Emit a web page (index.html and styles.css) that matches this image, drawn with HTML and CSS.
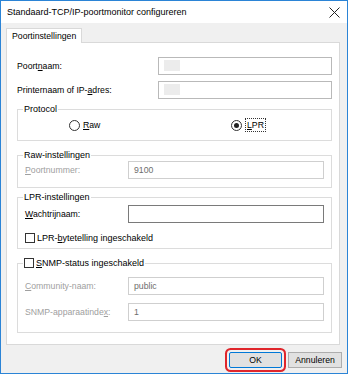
FILE: index.html
```html
<!DOCTYPE html>
<html lang="nl">
<head>
  <meta charset="UTF-8">
  <title>Standaard-TCP/IP-poortmonitor configureren</title>
  <link rel="stylesheet" href="styles.css">
</head>
<body>

  <div class="window">
    <div class="titlebar">
      <span class="title">Standaard-TCP/IP-poortmonitor configureren</span>
      <svg class="close" width="11" height="11" viewBox="0 0 11 11">
        <path d="M0.5 0.5 L10.5 10.5 M10.5 0.5 L0.5 10.5" stroke="#222" stroke-width="1" fill="none"/>
      </svg>
    </div>

    <div class="client">
      <div class="tabs">
        <div class="tab">Poortinstellingen</div>
      </div>

      <div class="panel">
        <div class="row">
          <span class="label">Poort<u>n</u>aam:</span>
          <div class="field soft"><span class="blur"></span></div>
        </div>
        <div class="row second">
          <span class="label">Printernaam of IP-<u>a</u>dres:</span>
          <div class="field soft"><span class="blur"></span></div>
        </div>

        <fieldset class="group protocol">
          <legend>Protocol</legend>
          <div class="radios">
            <span class="radio-item"><span class="radio"></span><u>R</u>aw</span>
            <span class="radio-item"><span class="radio checked"></span><span class="focus"><u>L</u>PR</span></span>
          </div>
        </fieldset>

        <fieldset class="group raw">
          <legend>Raw-instellingen</legend>
          <div class="grow">
            <span class="glabel disabled"><u>P</u>oortnummer:</span>
            <div class="field off">9100</div>
          </div>
        </fieldset>

        <fieldset class="group lpr">
          <legend>LPR-instellingen</legend>
          <div class="grow lpr-row">
            <span class="glabel"><u>W</u>achtrijnaam:</span>
            <div class="field"></div>
          </div>
          <div class="check-row">
            <span class="check"></span>LPR-<u>b</u>ytetelling ingeschakeld
          </div>
        </fieldset>

        <fieldset class="group snmp">
          <legend><span class="check"></span><u>S</u>NMP-status ingeschakeld</legend>
          <div class="grow snmp-first">
            <span class="glabel disabled"><u>C</u>ommunity-naam:</span>
            <div class="field off">public</div>
          </div>
          <div class="grow snmp-second">
            <span class="glabel disabled">SNMP-apparaatinde<u>x</u>:</span>
            <div class="field off">1</div>
          </div>
        </fieldset>
      </div>

      <div class="buttons">
        <button class="btn ok">OK</button>
        <button class="btn">Annuleren</button>
      </div>
    </div>
  </div>

</body>
</html>
```

FILE: styles.css
```css
* {
  box-sizing: border-box;
}

body {
  margin: 0;
  background-color: white;
  font-family: 'Liberation Sans', Arial, sans-serif;
  font-size: 8.7px;
  color: #000;
}

u {
  text-underline-offset: 1px;
}

.window {
  width: 348px;
  height: 374px;
  border: 1px solid #2b84d6;
  background-color: #f0f0f0;
  display: flex;
  flex-direction: column;
}

.titlebar {
  height: 22px;
  flex: none;
  background-color: white;
  display: flex;
  align-items: center;
  justify-content: space-between;
  padding: 0 7px 0 6px;
}

.title {
  font-size: 9px;
}

.client {
  flex: 1;
  padding: 5px 5px 0 5px;
}

.tabs {
  display: flex;
}

.tab {
  position: relative;
  z-index: 1;
  height: 15px;
  margin-bottom: -1px;
  padding: 0 5px;
  line-height: 14px;
  background-color: white;
  border: 1px solid #d9d9d9;
  border-bottom: none;
}

.panel {
  height: 303px;
  margin-right: 2px;
  padding: 14px 7px 11px 10px;
  background-color: white;
  border: 1px solid #d9d9d9;
}

.row {
  display: flex;
  align-items: center;
}

.row.second {
  margin-top: 6px;
}

.label {
  width: 141px;
  flex: none;
}

.field {
  flex: 1;
  height: 18px;
  padding: 0 5px;
  line-height: 17px;
  border: 1px solid #7a7a7a;
  background-color: white;
}

.field.soft {
  border-color: #b9b9b9;
  padding-top: 2px;
}

.field.off {
  border-color: #cfcfcf;
  color: #6d6d6d;
}

.blur {
  display: block;
  width: 16px;
  height: 11px;
  background-color: #ececec;
}

.group {
  margin: 0;
  padding: 0 7px 0 7px;
  min-width: 0;
  border: 1px solid #dcdcdc;
}

.group legend {
  padding: 0 1px;
  margin-left: -2px;
  line-height: 12px;
  font-size: 9px;
}

.protocol {
  margin-top: 4px;
  padding-top: 3px;
  padding-bottom: 8px;
}

.radios {
  display: flex;
  padding-left: 44px;
  height: 14px;
  align-items: center;
}

.radio-item {
  flex: none;
  display: flex;
  align-items: center;
}

.radio-item:first-child {
  width: 162px;
}

.radio {
  width: 11px;
  height: 11px;
  margin-right: 3px;
  border: 1px solid #333;
  border-radius: 50%;
  background-color: white;
  display: flex;
  align-items: center;
  justify-content: center;
}

.radio.checked::after {
  content: "";
  width: 5px;
  height: 5px;
  border-radius: 50%;
  background-color: #222;
}

.focus {
  padding: 1px 1px;
  border: 1px dotted #333;
}

.grow {
  display: flex;
  align-items: center;
}

.glabel {
  width: 103px;
  flex: none;
}

.disabled {
  color: #a0a0a0;
}

.raw {
  margin-top: 8px;
  padding-bottom: 8px;
}

.lpr {
  margin-top: 3px;
  padding-top: 2px;
  padding-bottom: 4px;
}

.check-row {
  margin-top: 8px;
  height: 13px;
  display: flex;
  align-items: center;
  font-size: 9px;
}

.check {
  width: 10px;
  height: 10px;
  margin-right: 2px;
  border: 1px solid #333;
  background-color: white;
  display: inline-block;
  vertical-align: -2px;
}

.snmp {
  margin-top: 8px;
  padding-top: 8px;
  padding-bottom: 11px;
}

.snmp-second {
  margin-top: 8px;
}

.buttons {
  display: flex;
  justify-content: flex-end;
  gap: 6px;
  padding-top: 7px;
}

.btn {
  height: 16px;
  padding: 0;
  font-family: 'Liberation Sans', Arial, sans-serif;
  font-size: 8.7px;
  color: #000;
  background-color: #e1e1e1;
  border: 1px solid #adadad;
  border-radius: 0;
}

.btn.ok {
  width: 53px;
  border-color: #0078d7;
  box-shadow: 0 0 0 2px #f0f0f0, 0 0 0 4px #e0262c;
  border-radius: 2px;
}

.btn:last-child {
  width: 54px;
}
```
